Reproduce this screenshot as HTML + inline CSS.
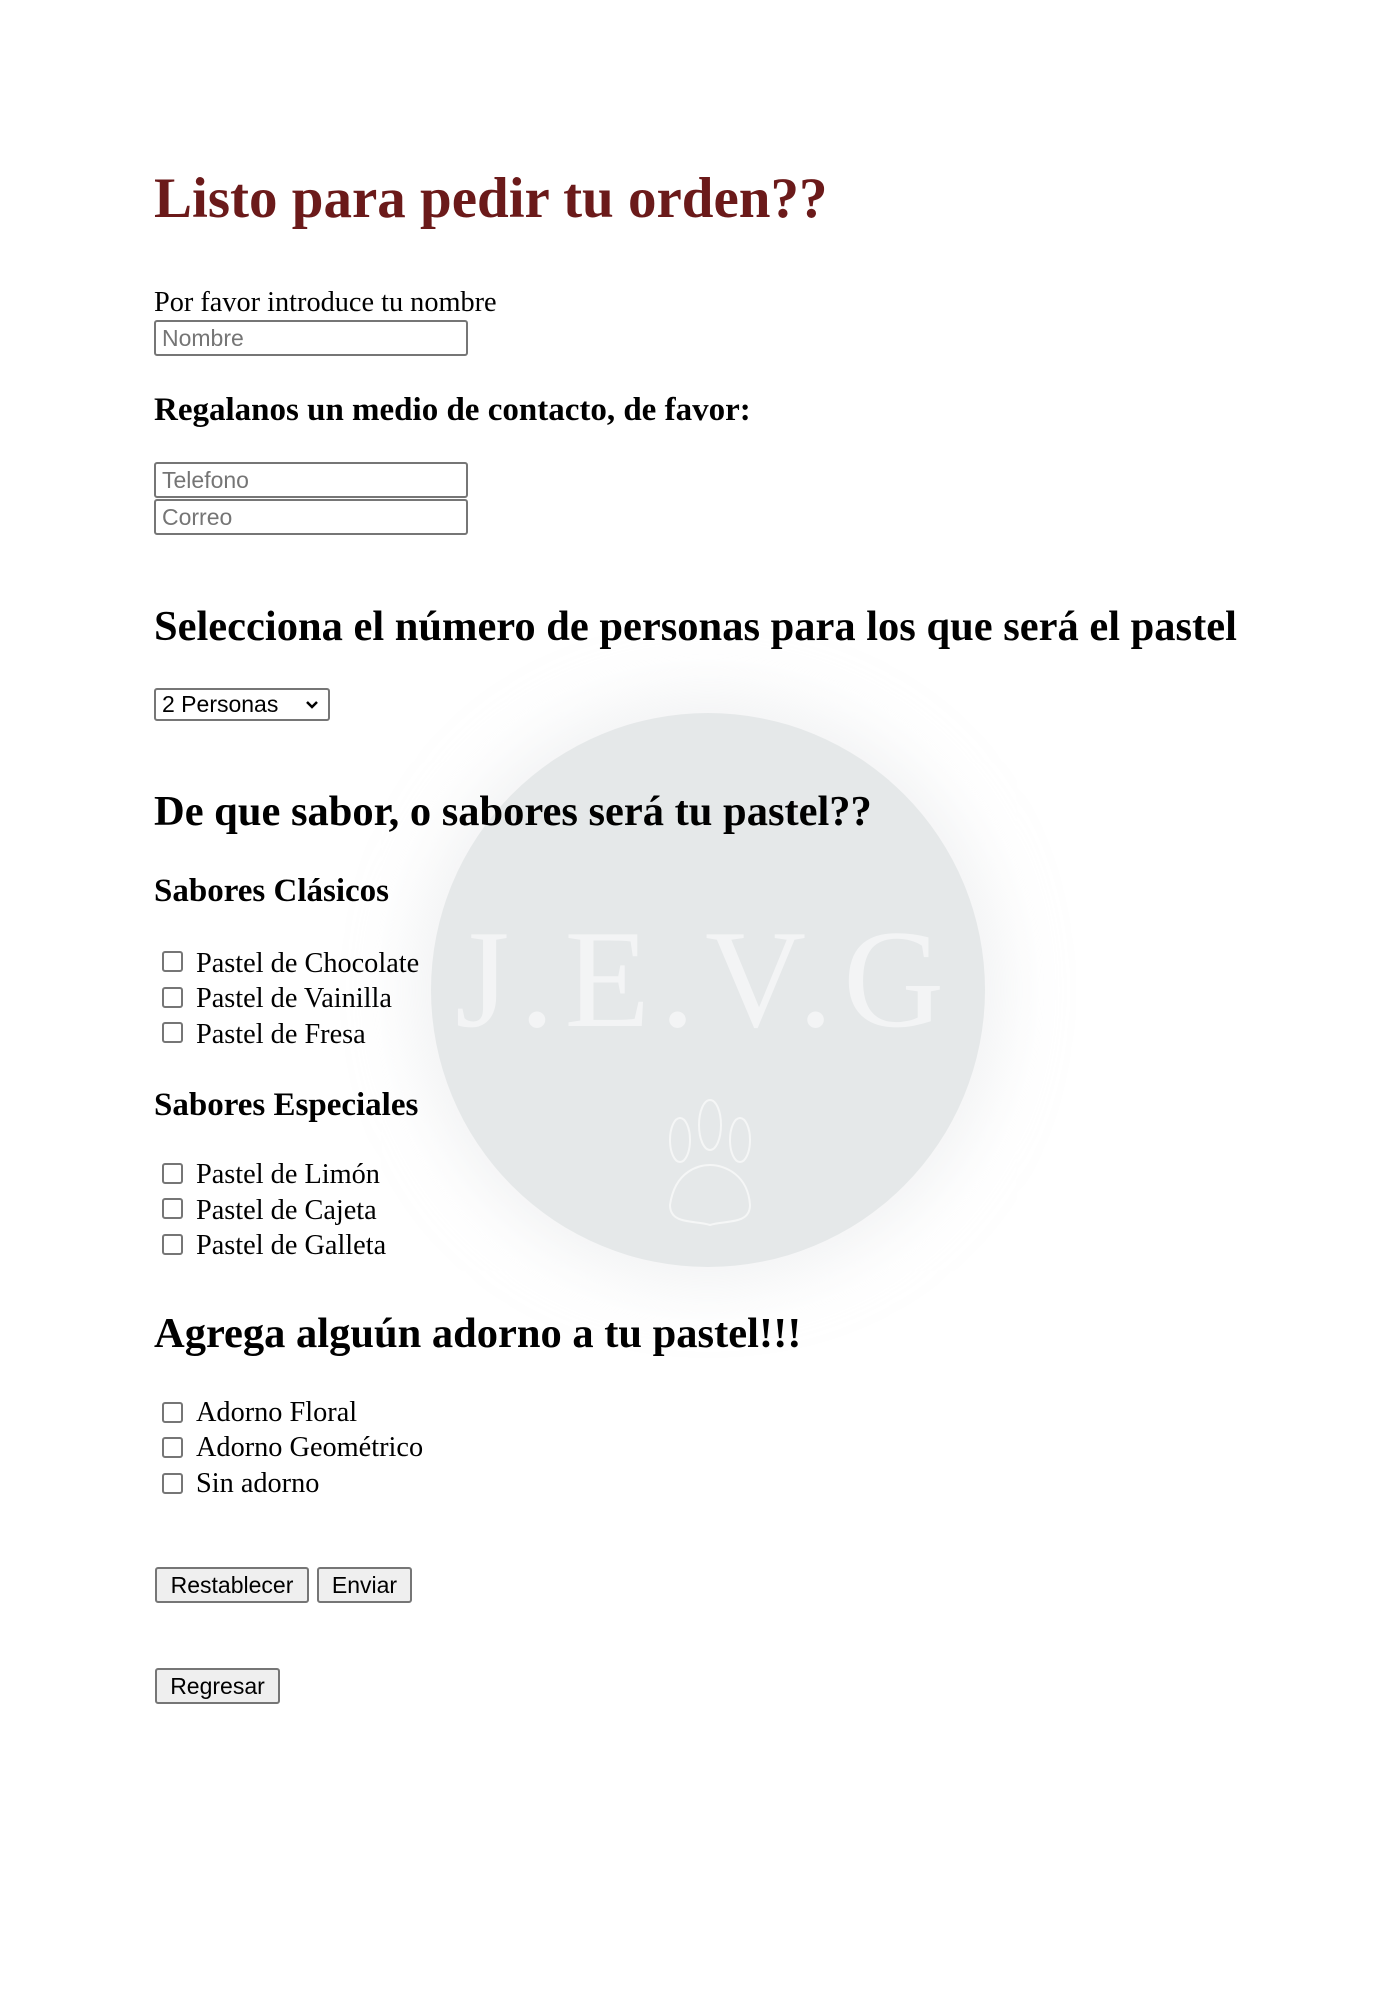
<!DOCTYPE html>
<html><head><meta charset="utf-8">
<style>
html,body{margin:0;padding:0;background:#fff;width:1400px;height:2000px;overflow:hidden;position:relative;font-family:"Liberation Serif",serif;color:#000}
.a{position:absolute;white-space:nowrap}
h1,h2,h3{margin:0;font-weight:bold}
.inp{position:absolute;left:154px;width:314px;height:36px;border:2px solid #767676;border-radius:3px;box-sizing:border-box;font-family:"Liberation Sans",sans-serif;font-size:23px;color:#757575;line-height:32px;padding-left:6px;background:#fff}
.cb{position:absolute;left:162px;width:21px;height:21px;border:2px solid #767676;border-radius:3px;box-sizing:border-box;background:#fff}
.lbl{position:absolute;left:196px;font-size:28.3px;line-height:32px}
.btn{position:absolute;height:36px;border:2px solid #767676;border-radius:3px;background:#efefef;box-sizing:border-box;font-family:"Liberation Sans",sans-serif;font-size:23px;line-height:32px;text-align:center;color:#000}
</style></head><body>
<div style="position:absolute;left:431px;top:713px;width:554px;height:554px;border-radius:50%;background:#e5e8e9;box-shadow:0 0 60px 20px rgba(230,232,233,0.5)"></div>
<div class="a" style="left:455px;top:905px;font-size:140px;line-height:150px;color:#f3f4f5;font-family:'Liberation Serif',serif;letter-spacing:10px">J.E.V.G</div>
<svg class="a" style="left:650px;top:1095px" width="120" height="140" viewBox="0 0 120 140" fill="none" stroke="#f5f6f6" stroke-width="2"><ellipse cx="30" cy="45" rx="10" ry="22"/><ellipse cx="60" cy="30" rx="11" ry="25"/><ellipse cx="90" cy="45" rx="10" ry="22"/><path d="M20 110 C25 75 50 70 60 70 C75 70 98 80 100 110 C100 130 75 125 60 130 C45 125 20 130 20 110Z"/></svg>

<h1 class="a" style="left:154px;top:167px;font-size:57px;line-height:64px;color:#6b1a1a">Listo para pedir tu orden??</h1>
<div class="a" style="left:154px;top:287px;font-size:28.3px;line-height:32px">Por favor introduce tu nombre</div>
<div class="inp" style="top:320px">Nombre</div>
<h3 class="a" style="left:154px;top:392px;font-size:33px;line-height:36px">Regalanos un medio de contacto, de favor:</h3>
<div class="inp" style="top:462px">Telefono</div>
<div class="inp" style="top:499px">Correo</div>
<h2 class="a" style="left:154px;top:603px;font-size:42.5px;line-height:48px">Selecciona el número de personas para los que será el pastel</h2>
<div class="a" style="left:154px;top:688px;width:176px;height:33px;border:2px solid #767676;border-radius:3px;box-sizing:border-box;font-family:'Liberation Sans',sans-serif;font-size:23px;line-height:29px;padding-left:6px">2 Personas<svg style="position:absolute;right:9px;top:10px" width="14" height="10" viewBox="0 0 14 10"><path d="M2 2 L7 7 L12 2" fill="none" stroke="#000" stroke-width="2.5"/></svg></div>
<h2 class="a" style="left:154px;top:788px;font-size:42.5px;line-height:48px">De que sabor, o sabores será tu pastel??</h2>
<h3 class="a" style="left:154px;top:873px;font-size:33px;line-height:36px">Sabores Clásicos</h3>
<div class="cb" style="top:951px"></div><div class="lbl" style="top:948px">Pastel de Chocolate</div>
<div class="cb" style="top:987px"></div><div class="lbl" style="top:983px">Pastel de Vainilla</div>
<div class="cb" style="top:1022px"></div><div class="lbl" style="top:1019px">Pastel de Fresa</div>
<h3 class="a" style="left:154px;top:1087px;font-size:33px;line-height:36px">Sabores Especiales</h3>
<div class="cb" style="top:1163px"></div><div class="lbl" style="top:1159px">Pastel de Limón</div>
<div class="cb" style="top:1198px"></div><div class="lbl" style="top:1195px">Pastel de Cajeta</div>
<div class="cb" style="top:1234px"></div><div class="lbl" style="top:1230px">Pastel de Galleta</div>
<h2 class="a" style="left:154px;top:1310px;font-size:42.5px;line-height:48px">Agrega alguún adorno a tu pastel!!!</h2>
<div class="cb" style="top:1402px"></div><div class="lbl" style="top:1397px">Adorno Floral</div>
<div class="cb" style="top:1437px"></div><div class="lbl" style="top:1432px">Adorno Geométrico</div>
<div class="cb" style="top:1473px"></div><div class="lbl" style="top:1468px">Sin adorno</div>
<div class="btn" style="left:155px;top:1567px;width:154px">Restablecer</div>
<div class="btn" style="left:317px;top:1567px;width:95px">Enviar</div>
<div class="btn" style="left:155px;top:1668px;width:125px">Regresar</div>
</body></html>
